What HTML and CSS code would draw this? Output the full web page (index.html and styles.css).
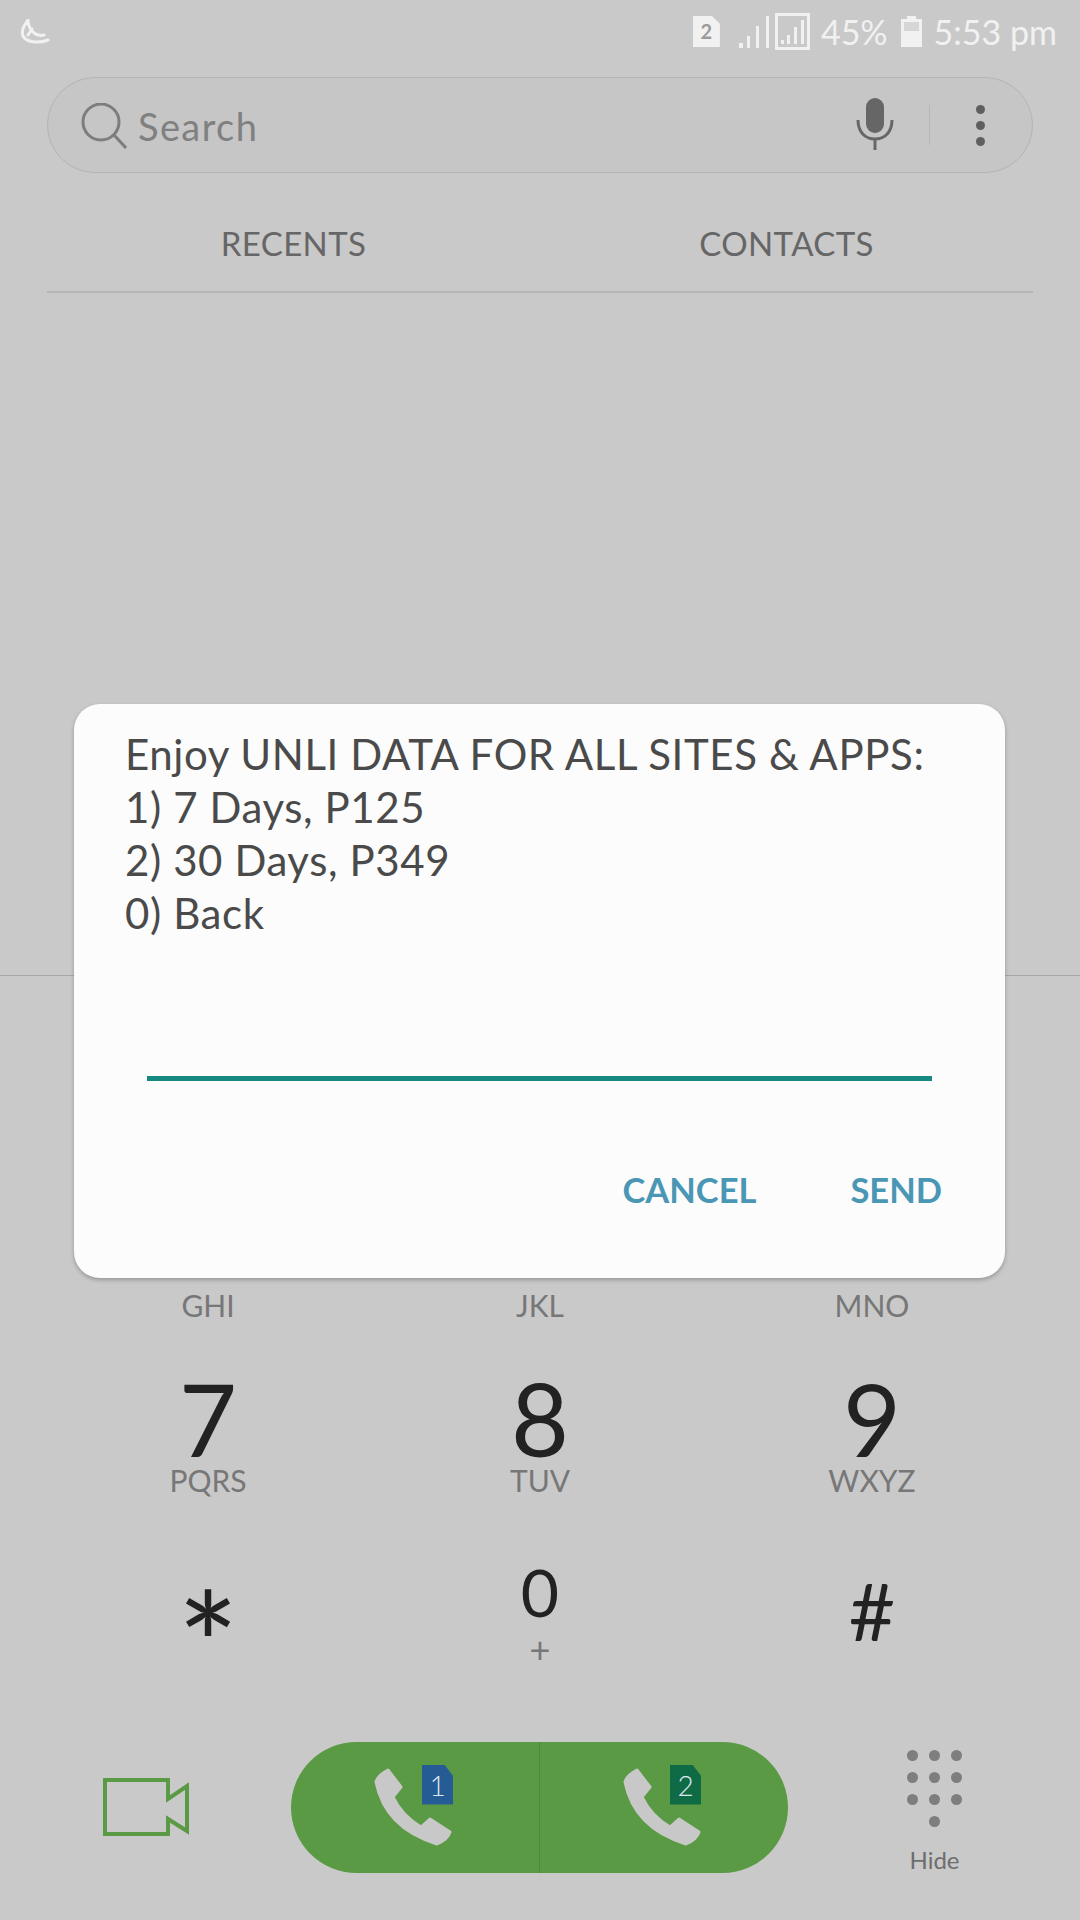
FILE: index.html
```html
<!DOCTYPE html>
<html lang="en">
<head>
  <meta charset="UTF-8">
  <meta name="viewport" content="width=device-width, initial-scale=1.0">
  <title>Phone</title>
  <link rel="stylesheet" href="styles.css">
</head>
<body>
  <div class="screen">
    <div class="statusbar">
      <svg class="logo" width="30" height="26" viewBox="0 0 30 26"><path d="M8 1C4 7 1 11 3 17C6 23 18 25 28 21M8 1C8 6 10 10 13 13C16 16 20 17 24 16M12 10L8 16" fill="none" stroke="#f1f1f1" stroke-width="3" stroke-linecap="round"/></svg>
      <div class="status-right">
        <div class="sim-small">2</div>
        <svg class="signal" width="30" height="32" viewBox="0 0 30 32"><g fill="#f1f1f1"><rect x="0" y="27" width="4" height="5"/><rect x="8" y="20" width="3" height="12"/><rect x="17" y="10" width="3" height="22"/><rect x="27" y="0" width="3" height="32"/></g></svg>
        <svg class="signal-box" width="35" height="37" viewBox="0 0 35 37"><rect x="1.5" y="1.5" width="32" height="34" fill="none" stroke="#f1f1f1" stroke-width="3"/><g fill="#f1f1f1"><rect x="6" y="27" width="3" height="4"/><rect x="12" y="22" width="3" height="9"/><rect x="19" y="14" width="3" height="17"/><rect x="26" y="7" width="3" height="24"/></g></svg>
        <span class="percent">45%</span>
        <svg class="battery" width="21" height="31" viewBox="0 0 21 31"><path d="M6 0H15V3H21V31H0V3H6Z" fill="#f1f1f1"/><rect x="3" y="6" width="15" height="9" fill="#d6d6d6"/></svg>
        <span class="clock">5:53 pm</span>
      </div>
    </div>

    <div class="searchbar">
      <svg class="search-icon" width="46" height="46" viewBox="0 0 46 46"><circle cx="20" cy="19" r="18" fill="none" stroke="#7d7d7d" stroke-width="3"/><path d="M33 32L45 45" stroke="#7d7d7d" stroke-width="3" fill="none"/></svg>
      <span class="search-text">Search</span>
      <svg class="mic" width="38" height="52" viewBox="0 0 38 52"><rect x="10" y="0" width="18" height="35" rx="9" fill="#666"/><path d="M2 22C2 34 9 41 19 41C29 41 36 34 36 22M19 41V52" fill="none" stroke="#666" stroke-width="3"/></svg>
      <div class="search-sep"></div>
      <div class="more"><i></i><i></i><i></i></div>
    </div>

    <div class="tabs">
      <div class="tab">RECENTS</div>
      <div class="tab">CONTACTS</div>
    </div>

    <div class="list-area"></div>

    <div class="keypad">
      <div class="key"><span class="letters">GHI</span></div>
      <div class="key"><span class="letters">JKL</span></div>
      <div class="key"><span class="letters">MNO</span></div>
      <div class="key key-row"><span class="digit">7</span><span class="letters">PQRS</span></div>
      <div class="key key-row"><span class="digit">8</span><span class="letters">TUV</span></div>
      <div class="key key-row"><span class="digit">9</span><span class="letters">WXYZ</span></div>
      <div class="key key-last"><span class="digit star">*</span></div>
      <div class="key key-last"><span class="digit zero">0</span><span class="letters plus">+</span></div>
      <div class="key key-last"><span class="digit hash">#</span></div>
    </div>

    <div class="callbar">
      <svg class="video" width="87" height="58" viewBox="0 0 87 58"><path d="M3 2H66V21L85 8V53L66 41V56H3Z" fill="none" stroke="#5b9a45" stroke-width="4"/></svg>
      <div class="call-pill">
        <div class="call-half">
          <svg class="handset" width="78" height="78" viewBox="0 0 78 78"><path d="M14 2L27 19L19 29Q28 48 47 59L56 51L76 64Q74 71 63 76Q11 60 2 14Q4 7 14 2Z" fill="#c8c8c8" stroke="#c8c8c8" stroke-width="3" stroke-linejoin="round"/></svg>
          <div class="sim sim-one">1</div>
        </div>
        <div class="call-half">
          <svg class="handset" width="78" height="78" viewBox="0 0 78 78"><path d="M14 2L27 19L19 29Q28 48 47 59L56 51L76 64Q74 71 63 76Q11 60 2 14Q4 7 14 2Z" fill="#c8c8c8" stroke="#c8c8c8" stroke-width="3" stroke-linejoin="round"/></svg>
          <div class="sim sim-two">2</div>
        </div>
      </div>
      <div class="hide-btn">
        <div class="dots">
          <i></i><i></i><i></i><i></i><i></i><i></i><i></i><i></i><i></i><i></i>
        </div>
        <span class="hide-label">Hide</span>
      </div>
    </div>

    <div class="dialog">
      <div class="dialog-msg">
        <div>Enjoy UNLI DATA FOR ALL SITES &amp; APPS:</div>
        <div>1) 7 Days, P125</div>
        <div>2) 30 Days, P349</div>
        <div>0) Back</div>
      </div>
      <div class="dialog-input"></div>
      <div class="dialog-actions">
        <span class="action">CANCEL</span>
        <span class="action">SEND</span>
      </div>
    </div>
  </div>
</body>
</html>
```

FILE: styles.css
```css
body {
  margin: 0;
  font-family: Lato, "Open Sans", sans-serif;
  background-color: #c9c9c9;
}
.screen {
  position: relative;
  display: flex;
  flex-direction: column;
  width: 1080px;
  height: 1920px;
  overflow: hidden;
  background-color: #c9c9c9;
}
.statusbar {
  display: flex;
  align-items: center;
  justify-content: space-between;
  height: 63px;
  padding: 0 23px 0 20px;
  margin-bottom: 14px;
}
.status-right {
  display: flex;
  align-items: center;
  color: #f1f1f1;
}
.sim-small {
  width: 27px;
  height: 31px;
  line-height: 31px;
  margin-right: 19px;
  background: #f1f1f1;
  clip-path: polygon(0 0, 70% 0, 100% 25%, 100% 100%, 0 100%);
  color: #9c9c9c;
  font-size: 20px;
  font-weight: 700;
  text-align: center;
}
.signal {
  margin-right: 6px;
}
.percent {
  margin-left: 11px;
  font-size: 34px;
}
.battery {
  margin-left: 13px;
}
.clock {
  margin-left: 12px;
  font-size: 34px;
}
.searchbar {
  display: flex;
  align-items: center;
  height: 94px;
  margin: 0 47px;
  padding-left: 33px;
  border: 1px solid #b4b4b4;
  border-radius: 48px;
  background-color: #c6c6c6;
}
.search-icon {
  margin-top: 2px;
}
.search-text {
  margin-top: 2px;
  margin-left: 11px;
  color: #808080;
  font-size: 38px;
  letter-spacing: 1.4px;
}
.mic {
  margin-left: auto;
  margin-top: -2px;
}
.search-sep {
  width: 1px;
  height: 40px;
  margin-left: 35px;
  background-color: #b7b7b7;
}
.more {
  display: flex;
  flex-direction: column;
  gap: 7px;
  margin: 0 47px 0 46px;
}
.more i {
  display: block;
  width: 9px;
  height: 9px;
  border-radius: 50%;
  background-color: #5f5f5f;
}
.tabs {
  display: grid;
  grid-template-columns: 1fr 1fr;
  height: 118px;
  margin: 0 47px;
  border-bottom: 2px solid #b5b5b5;
}
.tab {
  padding-top: 48px;
  color: #666;
  font-size: 33px;
  line-height: 44px;
  letter-spacing: 0.4px;
  text-align: center;
}
.list-area {
  height: 682px;
  border-bottom: 1px solid #a8a8a8;
}
.keypad {
  display: grid;
  grid-template-columns: repeat(3, 332px);
  margin: 312px 42px 0;
}
.key {
  display: flex;
  flex-direction: column;
  align-items: center;
}
.letters {
  color: #777;
  font-size: 30px;
  line-height: 34px;
}
.key-row {
  height: 242px;
  padding-top: 51px;
  box-sizing: border-box;
}
.digit {
  color: #222;
  font-size: 100px;
  line-height: 90px;
  height: 90px;
}
.key-last .digit {
  height: 62px;
  line-height: 62px;
}
.star {
  margin-top: 48px;
  font-size: 146px;
}
.zero {
  margin-top: -3px;
  margin-bottom: 3px;
  font-size: 66px;
}
.hash {
  margin-top: 15px;
  font-size: 80px;
}
.plus {
  margin-top: 6px;
  font-size: 36px;
}
.callbar {
  display: flex;
  align-items: center;
  margin-top: auto;
  padding: 0 0 45px 102px;
}
.call-pill {
  display: flex;
  width: 497px;
  height: 131px;
  margin-left: 102px;
  border-radius: 66px;
  background-color: #5b9a45;
}
.call-half {
  position: relative;
  display: flex;
  flex: 1;
  align-items: center;
  padding-left: 83px;
}
.call-half + .call-half {
  border-left: 1px solid #4c8a3a;
}
.sim {
  position: absolute;
  top: 23px;
  left: 131px;
  width: 31px;
  height: 40px;
  line-height: 40px;
  clip-path: polygon(0 0, 72% 0, 100% 28%, 100% 100%, 0 100%);
  color: #dfe6ee;
  font-size: 28px;
  font-weight: 300;
  text-align: center;
}
.sim-one {
  background-color: #265c96;
}
.sim-two {
  left: 130px;
  background-color: #0f6b45;
}
.hide-btn {
  display: flex;
  flex-direction: column;
  align-items: center;
  margin-left: 119px;
  margin-top: 11px;
}
.dots {
  display: grid;
  grid-template-columns: repeat(3, 11px);
  gap: 11px 11px;
}
.dots i {
  display: block;
  width: 11px;
  height: 11px;
  border-radius: 50%;
  background-color: #7e7e7e;
}
.dots i:last-child {
  grid-column: 2;
}
.hide-label {
  margin-top: 18px;
  color: #6e6e6e;
  font-size: 24px;
  line-height: 30px;
}
.dialog {
  position: absolute;
  top: 704px;
  left: 74px;
  display: flex;
  flex-direction: column;
  width: 931px;
  height: 574px;
  border-radius: 26px;
  background-color: #fcfcfc;
  box-shadow: 0 2px 4px rgba(0, 0, 0, 0.25);
}
.dialog-msg {
  padding: 24px 0 0 51px;
  color: #4a4a4a;
  font-size: 42px;
  line-height: 53px;
  letter-spacing: 0.6px;
}
.dialog-input {
  height: 5px;
  margin: 136px 73px 0 73px;
  background-color: #168a80;
}
.dialog-actions {
  display: flex;
  justify-content: flex-end;
  gap: 94px;
  margin-top: 87px;
  padding-right: 63px;
}
.action {
  color: #4a97b5;
  font-size: 34.5px;
  font-weight: 700;
  line-height: 44px;
}
```
